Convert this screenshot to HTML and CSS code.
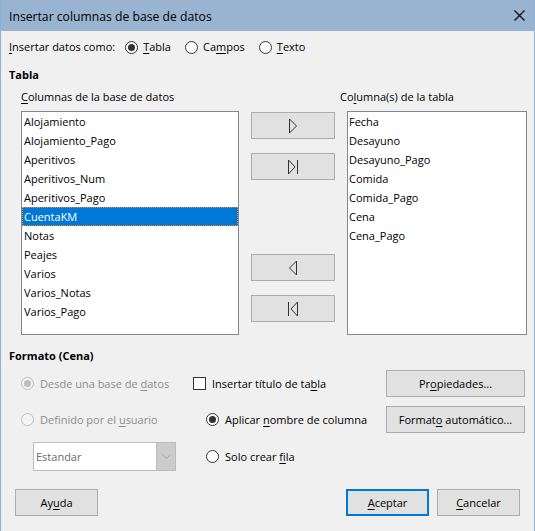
FILE: index.html
```html
<!DOCTYPE html>
<html lang="es">
<head>
<meta charset="utf-8">
<title>Insertar columnas de base de datos</title>
<link rel="stylesheet" href="styles.css">
</head>
<body>
<div class="window">
  <div class="titlebar">
    <span class="title">Insertar columnas de base de datos</span>
    <svg class="close" width="11" height="11" viewBox="0 0 11 11"><path d="M0.5 0.5 L10.5 10.5 M10.5 0.5 L0.5 10.5" stroke="#000" stroke-width="1.1" fill="none"/></svg>
  </div>
  <div class="content">
    <div class="insert-as">
      <span class="lead"><u>I</u>nsertar datos como:</span>
      <span class="opt first"><span class="radio checked"></span><span><u>T</u>abla</span></span>
      <span class="opt"><span class="radio"></span><span>Ca<u>m</u>pos</span></span>
      <span class="opt"><span class="radio"></span><span><u>T</u>exto</span></span>
    </div>

    <div class="heading tabla-h">Tabla</div>

    <div class="labels">
      <span class="lab-left"><u>C</u>olumnas de la base de datos</span>
      <span class="lab-right">Co<u>l</u>umna(s) de la tabla</span>
    </div>

    <div class="lists">
      <div class="listbox left">
        <div class="item">Alojamiento</div>
        <div class="item">Alojamiento_Pago</div>
        <div class="item">Aperitivos</div>
        <div class="item">Aperitivos_Num</div>
        <div class="item">Aperitivos_Pago</div>
        <div class="item selected">CuentaKM</div>
        <div class="item">Notas</div>
        <div class="item">Peajes</div>
        <div class="item">Varios</div>
        <div class="item">Varios_Notas</div>
        <div class="item">Varios_Pago</div>
      </div>
      <div class="movers">
        <div class="btn mover m1">
          <svg width="10" height="16" viewBox="0 0 10 16"><path d="M1.5 1 L8.5 8 L1.5 15 Z" fill="none" stroke="#333" stroke-width="1"/></svg>
        </div>
        <div class="btn mover m2">
          <svg width="12" height="16" viewBox="0 0 12 16"><path d="M1.5 1 L8 8 L1.5 15 Z" fill="none" stroke="#333" stroke-width="1"/><path d="M10.5 1 L10.5 15" stroke="#333" stroke-width="1"/></svg>
        </div>
        <div class="btn mover m3">
          <svg width="10" height="16" viewBox="0 0 10 16"><path d="M8.5 1 L1.5 8 L8.5 15 Z" fill="none" stroke="#333" stroke-width="1"/></svg>
        </div>
        <div class="btn mover m4">
          <svg width="12" height="16" viewBox="0 0 12 16"><path d="M1.5 1 L1.5 15" stroke="#333" stroke-width="1"/><path d="M10.5 1 L4 8 L10.5 15 Z" fill="none" stroke="#333" stroke-width="1"/></svg>
        </div>
      </div>
      <div class="listbox right">
        <div class="item">Fecha</div>
        <div class="item">Desayuno</div>
        <div class="item">Desayuno_Pago</div>
        <div class="item">Comida</div>
        <div class="item">Comida_Pago</div>
        <div class="item">Cena</div>
        <div class="item">Cena_Pago</div>
      </div>
    </div>

    <div class="heading fmt-h">Formato (Cena)</div>

    <div class="fmtgrid">
      <div class="cell c1 disabled"><span class="radio checked"></span><span>Desde una base de <u>d</u>atos</span></div>
      <div class="cell c2"><span class="check"></span><span>Insertar título de ta<u>b</u>la</span></div>
      <div class="cell c3"><div class="btn wide"><span>Pr<u>o</u>piedades...</span></div></div>

      <div class="cell c1 disabled"><span class="radio"></span><span>Definido por el <u>u</u>suario</span></div>
      <div class="cell c2 indent"><span class="radio checked"></span><span>Aplicar <u>n</u>ombre de columna</span></div>
      <div class="cell c3"><div class="btn wide"><span>Format<u>o</u> automático...</span></div></div>

      <div class="cell c1">
        <div class="combo">
          <span class="combo-text">Estandar</span>
          <span class="combo-btn">
            <svg width="9" height="6" viewBox="0 0 9 6"><path d="M0.5 0.5 L4.5 4.5 L8.5 0.5" fill="none" stroke="#a8a8a8" stroke-width="1"/></svg>
          </span>
        </div>
      </div>
      <div class="cell c2 indent"><span class="radio"></span><span>Solo crear <u>f</u>ila</span></div>
      <div class="cell c3"></div>
    </div>

    <div class="footer">
      <div class="btn foot"><span>Ay<u>u</u>da</span></div>
      <div class="foot-right">
        <div class="btn foot default"><span><u>A</u>ceptar</span></div>
        <div class="btn foot"><span><u>C</u>ancelar</span></div>
      </div>
    </div>
  </div>
</div>
</body>
</html>
```

FILE: styles.css
```css
* { box-sizing: border-box; }

html, body {
  margin: 0;
  padding: 0;
  background: #f0f0f0;
}

body {
  font-family: "Open Sans", "Noto Sans", "Liberation Sans", sans-serif;
  font-size: 11px;
  line-height: 16px;
  color: #000;
}

u { text-decoration: underline; text-underline-offset: 2px; }

.window {
  width: 535px;
  height: 531px;
  background: #f0f0f0;
  border-left: 1px solid #8db0d8;
  border-right: 1px solid #8db0d8;
  overflow: hidden;
}

.titlebar {
  height: 31px;
  background: #99b4d1;
  display: flex;
  align-items: center;
  justify-content: space-between;
  padding: 1px 9px 0 8px;
}

.title {
  font-size: 12.2px;
  line-height: 31px;
}

.close {
  display: block;
  margin-top: -1px;
}

.content {
  padding-left: 8px;
}

/* radio & checkbox */
.radio {
  display: inline-block;
  width: 13px;
  height: 13px;
  border: 1px solid #333;
  border-radius: 50%;
  background: #fff;
  position: relative;
  flex: none;
}
.radio.checked::after {
  content: "";
  position: absolute;
  left: 2px;
  top: 2px;
  width: 7px;
  height: 7px;
  border-radius: 50%;
  background: #333;
}
.check {
  display: inline-block;
  width: 13px;
  height: 13px;
  border: 1px solid #333;
  background: #fff;
  flex: none;
}

.insert-as {
  display: flex;
  align-items: center;
  height: 16px;
  margin-top: 8px;
}
.opt {
  display: flex;
  align-items: center;
  margin-left: 14px;
}
.opt.first { margin-left: 10px; }
.opt .radio { margin-right: 5px; }

.heading {
  font-weight: 700;
  height: 16px;
}
.tabla-h { margin-top: 12px; }

.labels {
  display: flex;
  height: 16px;
  margin-top: 6px;
  padding-left: 12px;
}
.lab-left { width: 319px; }

.lists {
  display: flex;
  margin-top: 6px;
  margin-left: 12px;
  height: 224px;
}

.listbox {
  background: #fff;
  border: 1px solid #828790;
  height: 224px;
}
.listbox.left { width: 218px; }
.listbox.right { width: 180px; }

.item {
  height: 19px;
  line-height: 19px;
  padding-left: 2px;
  white-space: nowrap;
}
.listbox.right .item { padding-left: 1px; }
.item.selected {
  background: #0078d7;
  color: #fff;
  outline: 1px dotted #f08c1e;
  outline-offset: -1px;
}

.movers {
  width: 84px;
  margin: 0 12px;
  display: flex;
  flex-direction: column;
}

.btn {
  background: #e1e1e1;
  border: 1px solid #adadad;
  display: flex;
  align-items: center;
  justify-content: center;
  white-space: nowrap;
}

.mover {
  height: 27px;
  width: 84px;
}
.mover svg { display: block; }
.m1 { margin-top: 1px; }
.m2 { margin-top: 14px; }
.m3 { margin-top: 74px; }
.m4 { margin-top: 14px; }

.fmt-h { margin-top: 13px; }

.fmtgrid {
  display: grid;
  grid-template-columns: 172px 193px 139px;
  grid-template-rows: 27px 27px 29px;
  row-gap: 9px;
  margin-top: 6px;
  margin-left: 12px;
}

.cell {
  display: flex;
  align-items: center;
  white-space: nowrap;
}
.cell .radio, .cell .check { margin-right: 6px; }
.cell.indent { padding-left: 13px; }

.disabled { color: #8d8d8d; }
.disabled .radio {
  border-color: #bcbcbc;
  background: #f4f4f4;
}
.disabled .radio.checked::after { background: #bcbcbc; }

.btn.wide {
  width: 139px;
  height: 27px;
}

.combo {
  margin-left: 12px;
  width: 143px;
  height: 29px;
  border: 1px solid #bcbcbc;
  background: #fff;
  display: flex;
  align-items: stretch;
}
.combo-text {
  flex: 1;
  color: #6d6d6d;
  padding-left: 2px;
  line-height: 27px;
}
.combo-btn {
  width: 19px;
  background: #cccccc;
  border-left: 1px solid #bcbcbc;
  display: flex;
  align-items: center;
  justify-content: center;
}
.combo-btn svg { display: block; }

.footer {
  display: flex;
  justify-content: space-between;
  margin-top: 18px;
  margin-left: 6px;
  width: 505px;
}
.foot-right {
  display: flex;
  gap: 8px;
}
.btn.foot {
  width: 83px;
  height: 27px;
}
.btn.default {
  border: 2px solid #0078d7;
}
```
